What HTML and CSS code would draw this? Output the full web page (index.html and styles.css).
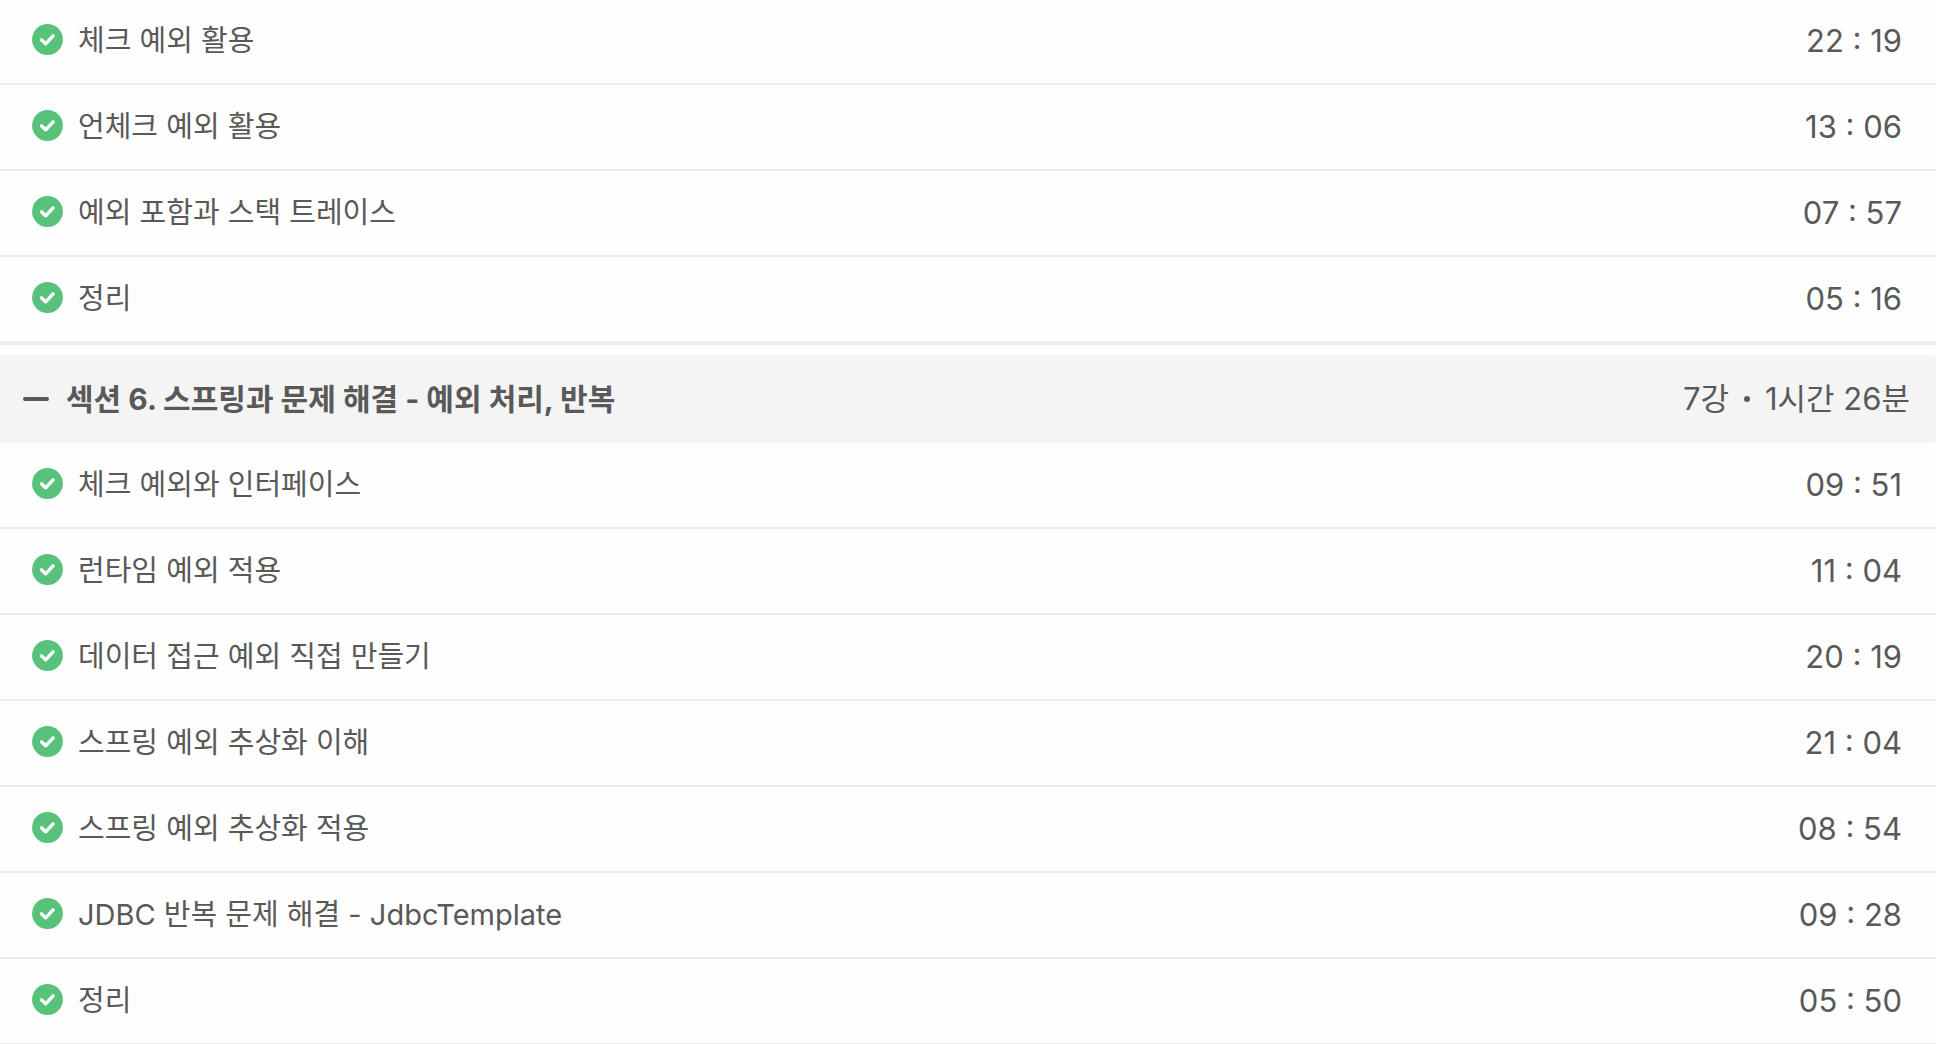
FILE: index.html
```html
<!DOCTYPE html>
<html lang="ko">
<head>
    <meta charset="UTF-8">
    <meta name="viewport" content="width=device-width, initial-scale=1.0">
    <title>커리큘럼</title>
    <link rel="stylesheet" href="styles.css">
</head>
<body>
    <svg class="sprite" aria-hidden="true">
        <symbol id="check" viewBox="0 0 31 31">
            <circle cx="15.5" cy="15.5" r="15.4" fill="#58c27a"/>
            <path d="M9.6 15.9l4.1 3.9 7.4-7.9" fill="none" stroke="#fff" stroke-width="3.4" stroke-linecap="round" stroke-linejoin="round"/>
        </symbol>
    </svg>
    <main class="curriculum">
        <section class="section">
            <ul class="lessons">
                <li class="lesson"><svg class="check"><use href="#check"/></svg><span class="title">체크 예외 활용</span><span class="time">22 : 19</span></li>
                <li class="lesson"><svg class="check"><use href="#check"/></svg><span class="title">언체크 예외 활용</span><span class="time">13 : 06</span></li>
                <li class="lesson"><svg class="check"><use href="#check"/></svg><span class="title">예외 포함과 스택 트레이스</span><span class="time">07 : 57</span></li>
                <li class="lesson"><svg class="check"><use href="#check"/></svg><span class="title">정리</span><span class="time">05 : 16</span></li>
            </ul>
        </section>
        <section class="section">
            <button type="button" class="section-header" aria-expanded="true">
                <svg class="minus" viewBox="0 0 26 4"><rect width="26" height="4" rx="2" fill="#595959"/></svg>
                <span class="section-title">섹션 6. 스프링과 문제 해결 - 예외 처리, 반복</span>
                <span class="section-info">
                    <span>7강</span>
                    <span class="dot"></span>
                    <span>1시간 26분</span>
                </span>
            </button>
            <ul class="lessons">
                <li class="lesson"><svg class="check"><use href="#check"/></svg><span class="title">체크 예외와 인터페이스</span><span class="time">09 : 51</span></li>
                <li class="lesson"><svg class="check"><use href="#check"/></svg><span class="title">런타임 예외 적용</span><span class="time">11 : 04</span></li>
                <li class="lesson"><svg class="check"><use href="#check"/></svg><span class="title">데이터 접근 예외 직접 만들기</span><span class="time">20 : 19</span></li>
                <li class="lesson"><svg class="check"><use href="#check"/></svg><span class="title">스프링 예외 추상화 이해</span><span class="time">21 : 04</span></li>
                <li class="lesson"><svg class="check"><use href="#check"/></svg><span class="title">스프링 예외 추상화 적용</span><span class="time">08 : 54</span></li>
                <li class="lesson"><svg class="check"><use href="#check"/></svg><span class="title">JDBC 반복 문제 해결 - JdbcTemplate</span><span class="time">09 : 28</span></li>
                <li class="lesson"><svg class="check"><use href="#check"/></svg><span class="title">정리</span><span class="time">05 : 50</span></li>
            </ul>
        </section>
    </main>
</body>
</html>
```
FILE: styles.css
```css
body {
    margin: 0;
    background-color: #fefefe;
    color: #595959;
    font-family: Inter, "Noto Sans CJK KR", sans-serif;
    font-size: 29px;
    line-height: 44px;
}

.sprite {
    display: none;
}

.curriculum {
    margin-top: -1px;
}

.section {
    margin-bottom: 10px;
    border-bottom: 2px solid #ededed;
}

.section:last-child {
    margin-bottom: 0;
    border-bottom: none;
}

.section-header {
    display: flex;
    align-items: center;
    box-sizing: border-box;
    width: 100%;
    padding: 22px 20px 22px 23px;
    border: none;
    border-radius: 0 4px 4px 0;
    background-color: #f4f4f4;
    color: inherit;
    font: inherit;
    text-align: left;
    cursor: pointer;
}

.minus {
    flex: none;
    width: 26px;
    height: 4px;
    margin-right: 17px;
}

.section-title {
    flex: 1;
    font-size: 30px;
    font-weight: 700;
}

.section-info {
    display: flex;
    align-items: center;
    padding-right: 6px;
    font-size: 31px;
}

.dot {
    width: 6px;
    height: 6px;
    margin: 0 15px;
    border-radius: 50%;
    background-color: #595959;
}

.lessons {
    margin: 0;
    padding: 0;
    list-style: none;
}

.lesson {
    display: flex;
    align-items: center;
    padding: 20px 34px 20px 32px;
    border-bottom: 2px solid #ededed;
}

.check {
    flex: none;
    width: 31px;
    height: 31px;
    margin-right: 15px;
    margin-bottom: 3px;
}

.title {
    flex: 1;
}

.time {
    font-size: 31px;
}
```
